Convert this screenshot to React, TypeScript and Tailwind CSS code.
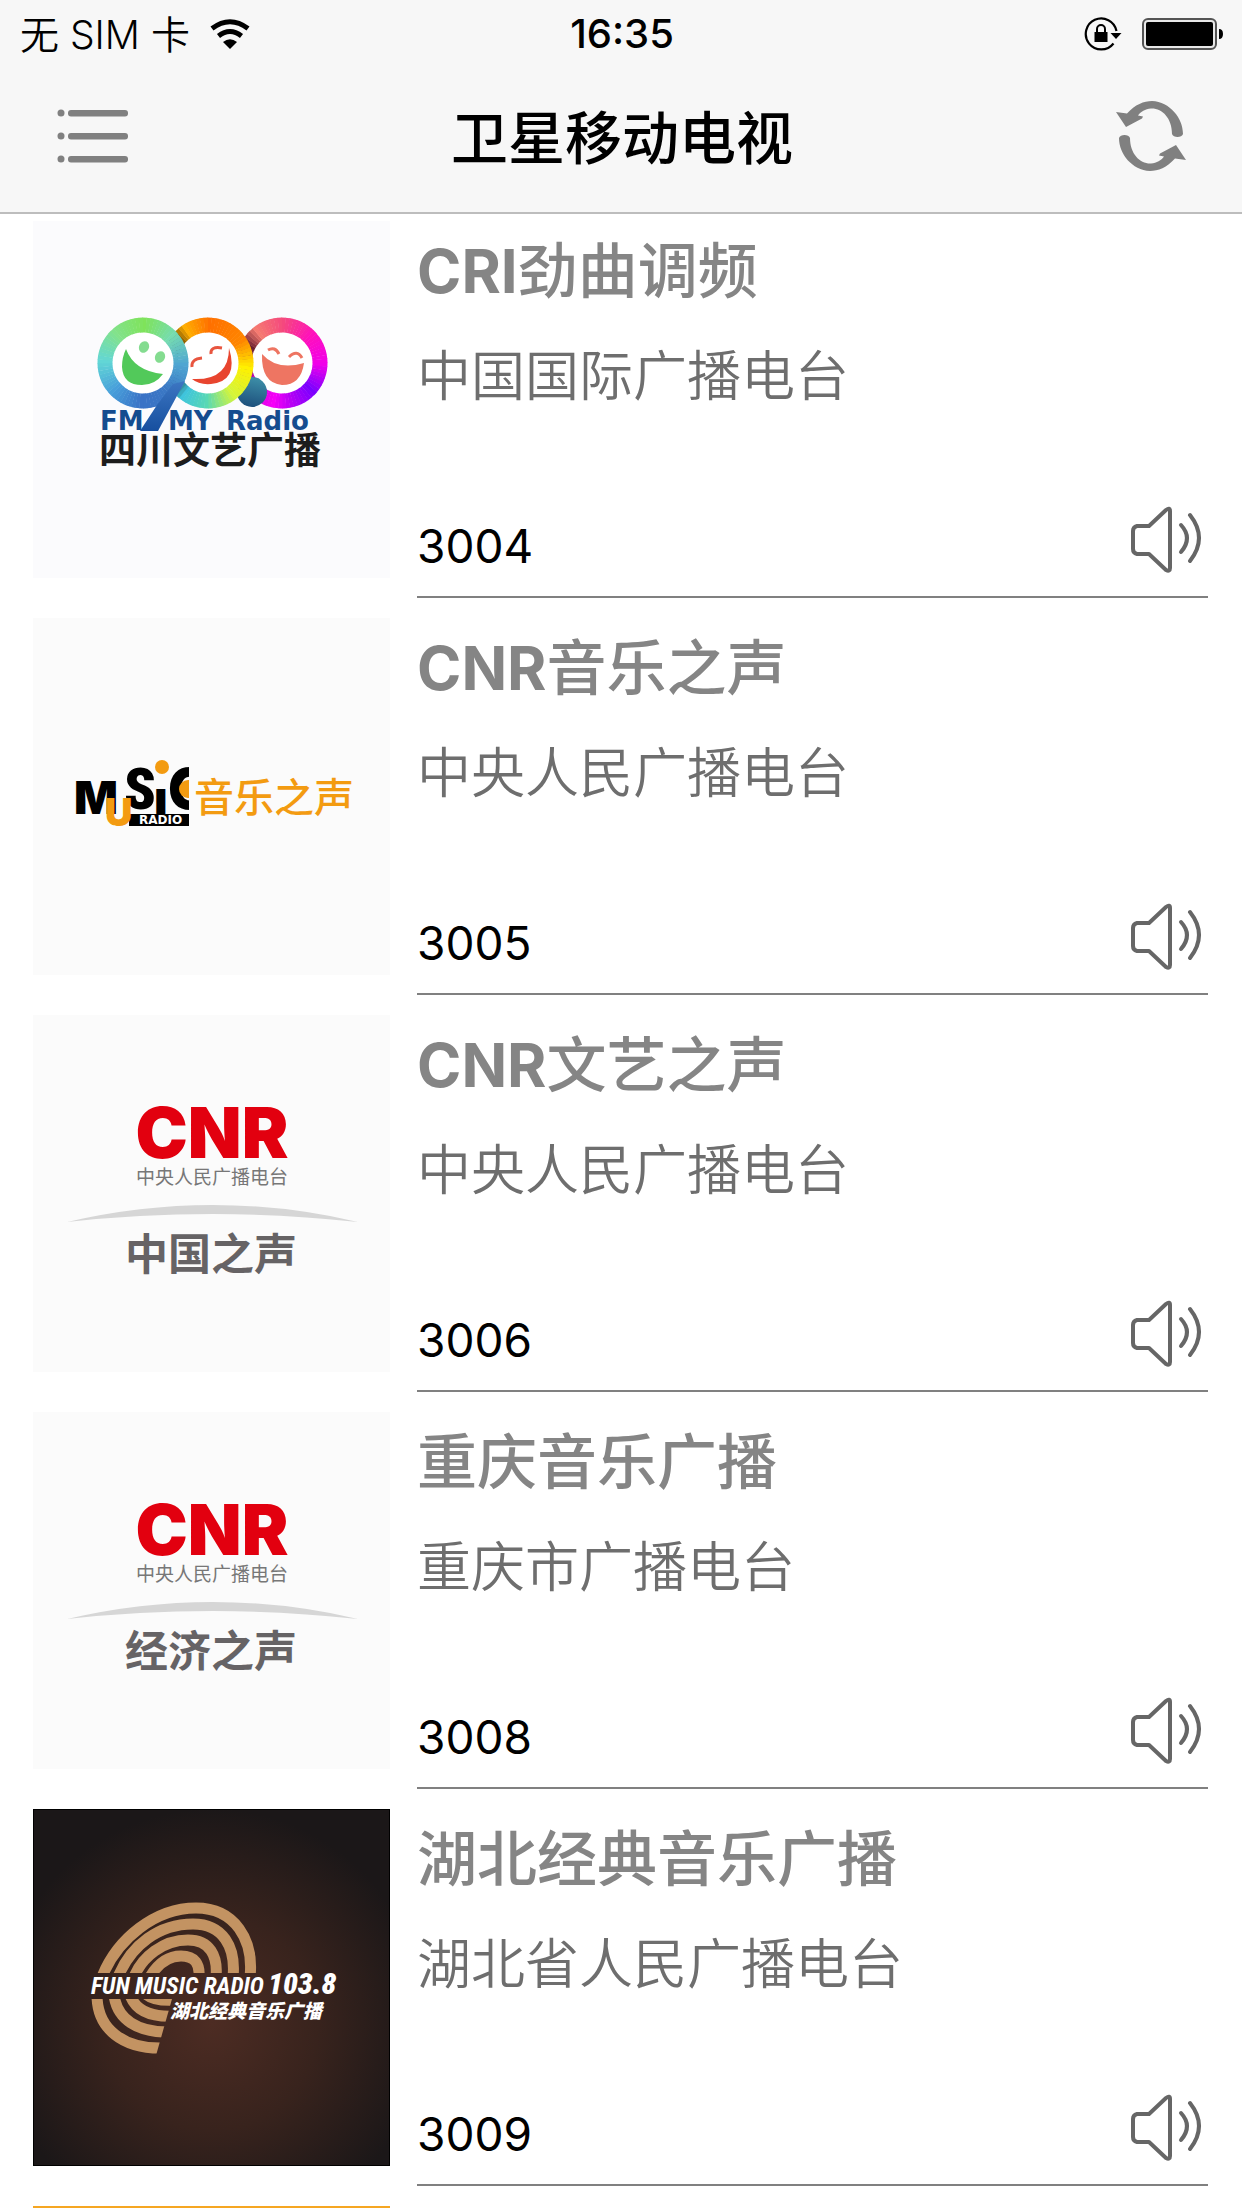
import type { ReactNode } from "react";

interface Station {
  id: string;
  prefix?: string;
  name: string;
  owner: string;
  logo: ReactNode;
}

type Stop = [number, string];

function mixColor(stops: Stop[], angle: number) {
  const next = stops.findIndex(([at]) => at >= angle);
  const [a1, c1] = stops[Math.max(next - 1, 0)];
  const [a2, c2] = stops[next];
  const t = a2 === a1 ? 0 : (angle - a1) / (a2 - a1);

  const channel = (i: number) => {
    const from = parseInt(c1.slice(i, i + 2), 16);
    const to = parseInt(c2.slice(i, i + 2), 16);
    return Math.round(from + (to - from) * t);
  };

  return `rgb(${channel(1)} ${channel(3)} ${channel(5)})`;
}

interface ColorRingProps {
  cx: number;
  cy: number;
  stops: Stop[];
}

// Ring whose colour changes around the circle, 0deg is at the top
function ColorRing({ cx, cy, stops }: ColorRingProps) {
  const step = 5;
  const point = (deg: number) => {
    const rad = ((deg - 90) * Math.PI) / 180;
    return `${cx + 38 * Math.cos(rad)} ${cy + 38 * Math.sin(rad)}`;
  };

  return (
    <g fill="none" strokeWidth="15">
      <circle cx={cx} cy={cy} r="34" fill="#fff" />
      {Array.from({ length: 360 / step }, (_, i) => (
        <path
          key={i}
          d={`M${point(i * step - 0.6)} A38 38 0 0 1 ${point((i + 1) * step)}`}
          stroke={mixColor(stops, i * step)}
        />
      ))}
    </g>
  );
}

const ringGreen: Stop[] = [
  [0, "#7fe35a"],
  [45, "#76dcb0"],
  [90, "#4fa6d2"],
  [135, "#3a78c4"],
  [180, "#3a72c6"],
  [225, "#489fda"],
  [270, "#62d6d6"],
  [315, "#82e28c"],
  [360, "#7fe35a"],
];

const ringOrange: Stop[] = [
  [0, "#ff7000"],
  [55, "#ff8600"],
  [95, "#fff000"],
  [140, "#d4f53a"],
  [180, "#58d8b4"],
  [215, "#3fc4dc"],
  [240, "#1b4a50"],
  [300, "#4a3000"],
  [325, "#ffae00"],
  [360, "#ff7000"],
];

const ringPink: Stop[] = [
  [0, "#f5487e"],
  [45, "#ff10bc"],
  [90, "#f000ea"],
  [130, "#7a00ff"],
  [165, "#b800f4"],
  [190, "#f600f8"],
  [225, "#d000d8"],
  [295, "#6a2030"],
  [320, "#f57a70"],
  [360, "#f5487e"],
];

function SichuanLogo() {
  return (
    <svg viewBox="0 0 357 357" className="size-full bg-[#fbfbfd]">
      <defs>
        <linearGradient id="tail" x1="0" y1="0" x2="0" y2="1">
          <stop offset="0" stopColor="#3c76c2" />
          <stop offset="1" stopColor="#164f9f" />
        </linearGradient>
        <linearGradient id="dot" x1="0.6" y1="0" x2="0.4" y2="1">
          <stop offset="0" stopColor="#3d8fa8" />
          <stop offset="1" stopColor="#1d4f7c" />
        </linearGradient>
      </defs>
      <ColorRing cx={249} cy={142} stops={ringPink} />
      <circle cx="219" cy="171" r="15" fill="url(#dot)" />
      <ColorRing cx={175} cy={142} stops={ringOrange} />
      <ColorRing cx={110} cy={142} stops={ringGreen} />
      <path d="M124 184 L107 210 H125 L152 160 L140 163 Z" fill="url(#tail)" />
      <path
        d="M93 128 Q101 150 130 153 Q122 164 109 164 Q90 164 89 146 Q89 136 93 128 Z"
        fill="#52c95a"
      />
      <ellipse cx="111" cy="126" rx="5" ry="6" fill="#84dc90" transform="rotate(25 111 126)" />
      <ellipse cx="127" cy="136" rx="5" ry="6" fill="#84dc90" transform="rotate(25 127 136)" />
      <path d="M159 158 Q196 160 196 127 Q206 160 178 163 Q166 164 159 158 Z" fill="#e8452f" />
      <path
        d="M159 146 Q158 138 169 137 M178 133 Q177 125 189 127"
        fill="none"
        stroke="#e8553f"
        strokeWidth="3"
      />
      <path d="M229 133 Q244 150 271 142 Q268 164 249 164 Q228 162 229 133 Z" fill="#ee7562" />
      <path
        d="M235 129 Q242 125 246 133 M256 136 Q264 128 269 137"
        fill="none"
        stroke="#ee7562"
        strokeWidth="3"
      />
      <g className="font-['DejaVu_Sans',sans-serif] text-[26px] font-bold" fill="#154c8f">
        <text x="67" y="209">FM</text>
        <text x="135" y="209">MY</text>
        <text x="193" y="209">Radio</text>
      </g>
      <text
        x="66"
        y="243"
        fill="#1c1c1c"
        className="font-['Noto_Sans_CJK_SC',sans-serif] text-[37px] font-bold"
      >
        四川文艺广播
      </text>
    </svg>
  );
}

function MusicRadioLogo() {
  return (
    <svg viewBox="0 0 357 357" className="size-full bg-[#fbfbfb]">
      <clipPath id="cut">
        <rect x="136" y="145" width="20" height="60" />
      </clipPath>
      <rect x="96" y="196" width="60" height="12" />
      <g className="font-[Inter,sans-serif] font-black">
        <text x="41" y="196" className="text-[46px]">M</text>
        <text
          x="91"
          y="191"
          className="font-['Roboto_Condensed',Roboto,sans-serif] text-[58px]"
        >
          S
        </text>
        <text x="121" y="196" className="text-[46px]">ı</text>
        <g clipPath="url(#cut)">
          <text x="135" y="191" className="text-[56px]">C</text>
          <circle cx="155" cy="171" r="9" fill="#f39b11" />
        </g>
        <text x="72" y="208" fill="#f39b11" className="text-[38px]">U</text>
      </g>
      <circle cx="129" cy="149" r="7" fill="#f39b11" />
      <text
        x="106"
        y="206"
        fill="#fff"
        className="font-['DejaVu_Sans',sans-serif] text-xs font-bold"
      >
        RADIO
      </text>
      <text
        x="161"
        y="194"
        fill="#f39b11"
        className="font-['Noto_Sans_CJK_SC',sans-serif] text-[40px] font-medium"
      >
        音乐之声
      </text>
    </svg>
  );
}

function CnrLogo({ channel }: { channel: string }) {
  return (
    <svg viewBox="0 0 357 357" className="size-full bg-[#fbfbfb]">
      <text
        x="179"
        y="143"
        fill="#e2000f"
        textAnchor="middle"
        className="font-[Inter,sans-serif] text-[70px] font-black"
      >
        CNR
      </text>
      <g textAnchor="middle" className="font-['Noto_Sans_CJK_SC',sans-serif]">
        <text x="179" y="169" fill="#777" className="text-[19px]">
          中央人民广播电台
        </text>
        <path d="M34 207 Q180 173 325 207 Q180 191 34 207 Z" fill="#d6d6d6" />
        <text x="178" y="255" fill="#666365" className="text-[43px] font-bold">
          {channel}
        </text>
      </g>
    </svg>
  );
}

function HubeiLogo() {
  return (
    <svg viewBox="0 0 357 357" className="size-full">
      <defs>
        <radialGradient id="glow" cx="0.5" cy="0.6" r="0.6">
          <stop offset="0" stopColor="#4d2c23" />
          <stop offset="0.5" stopColor="#38231d" />
          <stop offset="1" stopColor="#1b1718" />
        </radialGradient>
        <clipPath id="upper">
          <rect x="50" y="80" width="190" height="84" />
        </clipPath>
        <clipPath id="lower">
          <path d="M50 190 H139 L122 250 H50 Z" />
        </clipPath>
      </defs>
      <rect width="357" height="357" fill="url(#glow)" />
      <rect x="0.5" y="0.5" width="356" height="356" fill="none" stroke="#000" />
      <g fill="none" stroke="#c39362" strokeWidth="11">
        <g clipPath="url(#upper)">
          <path d="M69 168 C84 130 122 99 163 99 C202 99 221 131 217 168" />
          <path d="M85 168 C98 136 126 115 160 115 C190 115 203 138 200 168" />
          <path d="M101 168 C109 148 130 131 155 131 C177 131 185 147 183 168" />
          <path d="M117 168 C124 156 134 147 148 147 C162 147 167 155 166 168" />
        </g>
        <g clipPath="url(#lower)">
          <path d="M64 186 C64 220 90 240 130 239" />
          <path d="M81 186 C84 210 104 224 138 223" />
          <path d="M97 186 C102 200 116 209 144 207" />
          <path d="M114 186 C120 191 130 192 144 191" />
        </g>
      </g>
      <g
        fill="#fff"
        className="font-['Roboto_Condensed',Roboto,sans-serif] font-bold italic"
      >
        <text x="58" y="185" className="text-2xl">FUN MUSIC RADIO</text>
        <text x="235" y="185" className="text-[30px] font-black">103.8</text>
        <text
          x="137"
          y="209"
          className="font-['Noto_Sans_CJK_SC',sans-serif] text-[19px] font-black"
        >
          湖北经典音乐广播
        </text>
      </g>
    </svg>
  );
}

function WifiIcon() {
  return (
    <svg viewBox="0 0 40 30" className="h-[30px] w-10">
      <g fill="none" stroke="#000" strokeWidth="5">
        <path d="M2 9.5 Q20 -4 38 9.500" />
        <path d="M8.500 17 Q20 8 31.500 17" />
      </g>
      <path d="M13 23 Q20 17.500 27 23 L20 30 Z" />
    </svg>
  );
}

function RotationLockIcon() {
  return (
    <svg viewBox="0 0 38 34" className="h-[34px] w-[38px]">
      <path
        d="M32.500 14 A15.500 15.500 0 1 0 29.500 26.500"
        fill="none"
        stroke="#000"
        strokeWidth="2.200"
      />
      <path d="M26.500 16 H37.500 L32 22 Z" />
      <rect x="10.500" y="15" width="13" height="10" />
      <path d="M13 16 V12 A4 4 0 0 1 21 12 V16" fill="none" stroke="#000" strokeWidth="2" />
    </svg>
  );
}

function BatteryIcon() {
  return (
    <svg viewBox="0 0 82 32" className="h-8 w-[82px]">
      <rect x="1" y="1" width="73" height="30" rx="5" fill="#e9e9e9" stroke="#555" strokeWidth="2" />
      <rect x="4" y="4" width="67" height="24" rx="2" />
      <path d="M77 11 Q81 11 81 16 Q81 21 77 21 Z" />
    </svg>
  );
}

function ListIcon() {
  return (
    <svg viewBox="0 0 72 54" className="h-[54px] w-[72px]" fill="#808080">
      {[0, 23, 46].map((y) => (
        <g key={y}>
          <circle cx="5" cy={y + 4} r="3.500" />
          <rect x="12" y={y + 1} width="60" height="6.500" rx="3" />
        </g>
      ))}
    </svg>
  );
}

function RefreshIcon() {
  return (
    <svg viewBox="0 0 70 70" className="size-[70px]" fill="#808080">
      <path
        id="arrow"
        d="M0 11 L11 12.500 C19 3.500 28 0 36 0 C54 1 67 17 67 33 C66 37 57 37 56 33 C56 17 46 7 35 7.500 C29 8 25 10.500 22 14.500 L27 15.500 L26 17.500 L10 26 Z"
      />
      <use href="#arrow" transform="rotate(180 35 35)" />
    </svg>
  );
}

function SpeakerIcon() {
  return (
    <svg
      viewBox="0 0 72 68"
      className="h-[68px] w-[72px]"
      fill="none"
      stroke="#666"
      strokeWidth="4"
      strokeLinecap="round"
      strokeLinejoin="round"
    >
      <path d="M7 20 H19 L36 4 Q40 1 40 5 V62 Q40 66 36 64 L19 48 H7 Q3 47 3 43 V25 Q3 21 7 20 Z" />
      <path d="M51 19 Q63 32 51 46" />
      <path d="M60 9 Q78 32 60 55" />
    </svg>
  );
}

const stations: Station[] = [
  { id: "3004", prefix: "CRI", name: "劲曲调频", owner: "中国国际广播电台", logo: <SichuanLogo /> },
  { id: "3005", prefix: "CNR", name: "音乐之声", owner: "中央人民广播电台", logo: <MusicRadioLogo /> },
  {
    id: "3006",
    prefix: "CNR",
    name: "文艺之声",
    owner: "中央人民广播电台",
    logo: <CnrLogo channel="中国之声" />,
  },
  { id: "3008", name: "重庆音乐广播", owner: "重庆市广播电台", logo: <CnrLogo channel="经济之声" /> },
  { id: "3009", name: "湖北经典音乐广播", owner: "湖北省人民广播电台", logo: <HubeiLogo /> },
];

function StationRow({ id, prefix, name, owner, logo }: Station) {
  return (
    <li className="flex gap-[27px] pb-10">
      <div className="size-[357px] shrink-0">{logo}</div>

      <div className="-mb-5 flex flex-1 flex-col border-b-2 border-[#808080]">
        <h2 className="mt-[18px] text-[60px] leading-16 font-medium text-[#858585]">
          {prefix && <span className="font-bold">{prefix}</span>}
          {name}
        </h2>
        <p className="mt-[42px] text-[54px] leading-16 font-[350] text-[#6e6e6e]">{owner}</p>

        <div className="mt-auto flex items-end justify-between pr-[6px] pb-[22px]">
          <span className="text-[46px] leading-14 text-black">{id}</span>
          <button aria-label="播放">
            <SpeakerIcon />
          </button>
        </div>
      </div>
    </li>
  );
}

export default function App() {
  return (
    <div className="flex h-screen flex-col overflow-hidden bg-white font-[Inter,'Noto_Sans_CJK_SC',sans-serif] text-black">
      <header className="shrink-0 border-b-2 border-[#bdbdbd] bg-[#f7f7f7]">
        <div className="grid h-[68px] grid-cols-3 items-center pr-[18px] pl-5">
          <div className="flex items-center gap-5 text-[39px] leading-none font-[350]">
            <span>无 SIM 卡</span>
            <WifiIcon />
          </div>
          <time className="text-center text-[40px] leading-none font-medium">16:35</time>
          <div className="flex items-center justify-end gap-5">
            <RotationLockIcon />
            <BatteryIcon />
          </div>
        </div>

        <div className="flex h-36 items-center justify-between px-14 pb-2">
          <button aria-label="菜单">
            <ListIcon />
          </button>
          <h1 className="pt-1 text-[57px] leading-none font-medium">卫星移动电视</h1>
          <button aria-label="刷新">
            <RefreshIcon />
          </button>
        </div>
      </header>

      <ul className="pt-[7px] pr-[34px] pl-[33px]">
        {stations.map((station) => (
          <StationRow key={station.id} {...station} />
        ))}
        <li aria-hidden="true">
          <div className="size-[357px] bg-[#f5a623]" />
        </li>
      </ul>
    </div>
  );
}
